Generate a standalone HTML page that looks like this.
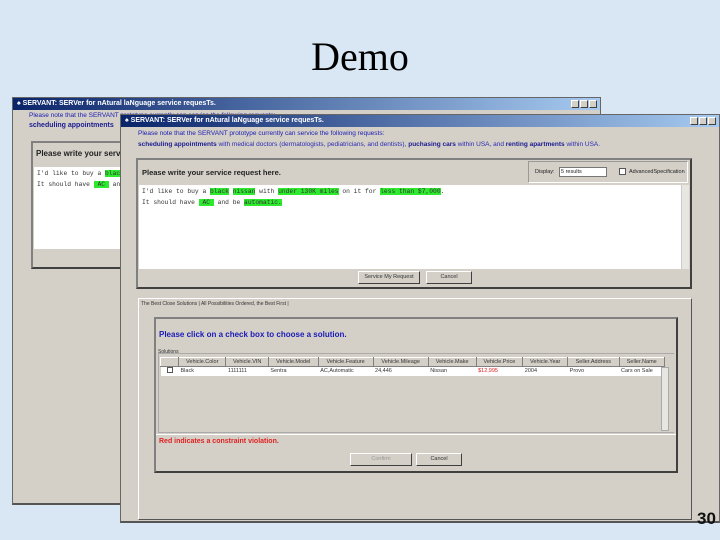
<!DOCTYPE html>
<html><head><meta charset="utf-8"><style>
*{margin:0;padding:0;box-sizing:border-box}
body{width:720px;height:540px;position:relative;overflow:hidden;background:#d9e7f5;font-family:"Liberation Sans",sans-serif}
.a{position:absolute}
.win{background:#d4d0c8;border:1px solid #666}
.tb{background:linear-gradient(90deg,#0a246a,#a6caf0);color:#fff;font-size:7px;font-weight:bold;height:12px;line-height:12px;padding-left:4px;white-space:nowrap;overflow:hidden}
.btns{position:absolute;right:3px;top:2px;display:flex;gap:1px}
.btns i{display:block;width:8px;height:8px;background:#d4d0c8;border:1px solid #fff;border-right-color:#404040;border-bottom-color:#404040}
.blue{color:#1a1ab0;font-size:6.5px;white-space:nowrap}
.bb{font-weight:bold;color:#1a1a90}
.panel{border:2px solid #808080;border-right-color:#404040;border-bottom-color:#404040;background:#d4d0c8}
.ta{background:#fff;font-family:"Liberation Mono",monospace;font-size:6.3px;color:#333;line-height:11px;padding:1px 3px;white-space:nowrap;overflow:hidden}
.g{background:#2eea2e}
.btn{position:absolute;height:13px;background:#d4d0c8;border:1px solid #fff;border-right-color:#404040;border-bottom-color:#404040;font-size:5.5px;text-align:center;line-height:11px;color:#333}
table{border-collapse:collapse;font-size:5.5px;color:#333}
td,th{height:9px;padding:0 2px;white-space:nowrap;font-weight:normal;text-align:left}
th{background:#d4d0c8;border:1px solid #fff;border-right-color:#808080;border-bottom-color:#808080;text-align:center}
</style></head><body>
<div class="a" style="left:0;top:33px;width:720px;text-align:center;font-family:'Liberation Serif',serif;font-size:40px;color:#000">Demo</div>

<!-- back window -->
<div class="a win" style="left:12px;top:97px;width:589px;height:408px;border-bottom:2px solid #555">
 <div class="tb">&#9824; SERVANT: SERVer for nAtural laNguage service requesTs.<div class="btns"><i></i><i></i><i></i></div></div>
 <div class="a blue" style="left:16px;top:14px">Please note that the SERVANT prototype currently can service the following requests:</div>
 <div class="a blue bb" style="left:16px;top:24px;font-size:7px">scheduling appointments</div>
 <div class="a panel" style="left:18px;top:43px;width:560px;height:128px">
  <div style="height:24px;line-height:22px;font-size:8px;font-weight:bold;color:#222;padding-left:3px">Please write your service request here.</div>
  <div class="ta" style="height:82px;margin:0 1px">I'd like to buy a <span class="g">black</span><br>It should have <span class="g">&nbsp;AC&nbsp;</span> and</div>
 </div>
</div>

<!-- front window -->
<div class="a win" style="left:120px;top:114px;width:600px;height:409px;border-bottom:2px solid #555">
 <div class="tb">&#9824; SERVANT: SERVer for nAtural laNguage service requesTs.<div class="btns"><i></i><i></i><i></i></div></div>
 <div class="a blue" style="left:17px;top:15px">Please note that the SERVANT prototype currently can service the following requests:</div>
 <div class="a blue" style="left:17px;top:26px;color:#2a2ab0"><span class="bb">scheduling appointments</span> with medical doctors (dermatologists, pediatricians, and dentists), <span class="bb">puchasing cars</span> within USA, and <span class="bb">renting apartments</span> within USA.</div>
 <div class="a panel" style="left:15px;top:43px;width:556px;height:131px">
  <div style="height:25px;line-height:25px;font-size:7.5px;font-weight:bold;color:#222;padding-left:4px;position:relative">Please write your service request here.
   <div class="a" style="right:2px;top:1px;width:160px;height:22px;border:1px solid #fff;border-left-color:#999;border-top-color:#999;font-weight:normal;font-size:5.5px;line-height:20px">
    <span class="a" style="left:6px">Display:</span>
    <span class="a" style="left:30px;top:5px;width:48px;height:10px;background:#fff;border:1px solid #777;line-height:8px;padding-left:1px">5 results</span>
    <span class="a" style="left:90px;top:6px;width:7px;height:7px;background:#fff;border:1px solid #555"></span>
    <span class="a" style="left:100px">AdvancedSpecification</span>
   </div>
  </div>
  <div class="ta" style="height:84px;margin:0 1px;position:relative">I'd like to buy a <span class="g">black</span> <span class="g">nissan</span> with <span class="g">under 130K miles</span> on it for <span class="g">less than $7,000</span>.<br>It should have <span class="g">&nbsp;AC&nbsp;</span> and be <span class="g">automatic.</span>
   <div class="a" style="right:0;top:0;width:8px;height:84px;background:#e8e6e0;border-left:1px solid #ccc"></div></div>
  <div class="btn" style="left:220px;top:111px;width:62px">Service My Request</div>
  <div class="btn" style="left:288px;top:111px;width:46px">Cancel</div>
 </div>
 <!-- tabs -->
 <div class="a" style="left:17px;top:183px;width:554px;height:222px;border:1px solid #fff;border-right-color:#555;border-bottom-color:#555">
  <div class="a" style="left:2px;top:0;height:10px;font-size:5px;line-height:10px;color:#333;white-space:nowrap">The Best Close Solutions | All Possibilities Ordered, the Best First |</div>
  <div class="a panel" style="left:15px;top:18px;width:524px;height:156px">
   <div class="a" style="left:3px;top:11px;font-size:8px;font-weight:bold;color:#1a1ab8">Please click on a check box to choose a solution.</div>
   <div class="a" style="left:2px;top:30px;font-size:5px;color:#333">Solutions</div>
   <div class="a" style="left:2px;top:34px;width:516px;height:80px;border:1px solid #aaa;border-right:none"></div>
   <div class="a" style="left:4px;top:38px;width:505px;height:75px">
    <table style="width:505px">
     <tr><th style="width:18px"></th><th>Vehicle.Color</th><th>Vehicle.VIN</th><th>Vehicle.Model</th><th>Vehicle.Feature</th><th>Vehicle.Mileage</th><th>Vehicle.Make</th><th>Vehicle.Price</th><th>Vehicle.Year</th><th>Seller.Address</th><th>Seller.Name</th></tr>
     <tr style="background:#fff"><td><span style="display:inline-block;width:6px;height:6px;border:1px solid #555;margin-left:4px"></span></td><td>Black</td><td>1111111</td><td>Sentra</td><td>AC,Automatic</td><td>24,446</td><td>Nissan</td><td style="color:#e02020">$12,995</td><td>2004</td><td>Provo</td><td>Cars on Sale</td></tr>
    </table>
   </div>
   <div class="a" style="left:505px;top:48px;width:8px;height:64px;background:#e8e6e0;border:1px solid #aaa"></div>
   <div class="a" style="left:0;top:115px;width:520px;border-top:1px solid #fff"></div>
   <div class="a" style="left:3px;top:119px;font-size:7px;font-weight:bold;color:#e02020">Red indicates a constraint violation.</div>
   <div class="btn" style="left:194px;top:134px;width:62px;color:#999">Confirm</div>
   <div class="btn" style="left:260px;top:134px;width:46px">Cancel</div>
  </div>
 </div>
</div>
<div class="a" style="left:697px;top:509px;font-size:17px;font-weight:bold;color:#111">30</div>
</body></html>
